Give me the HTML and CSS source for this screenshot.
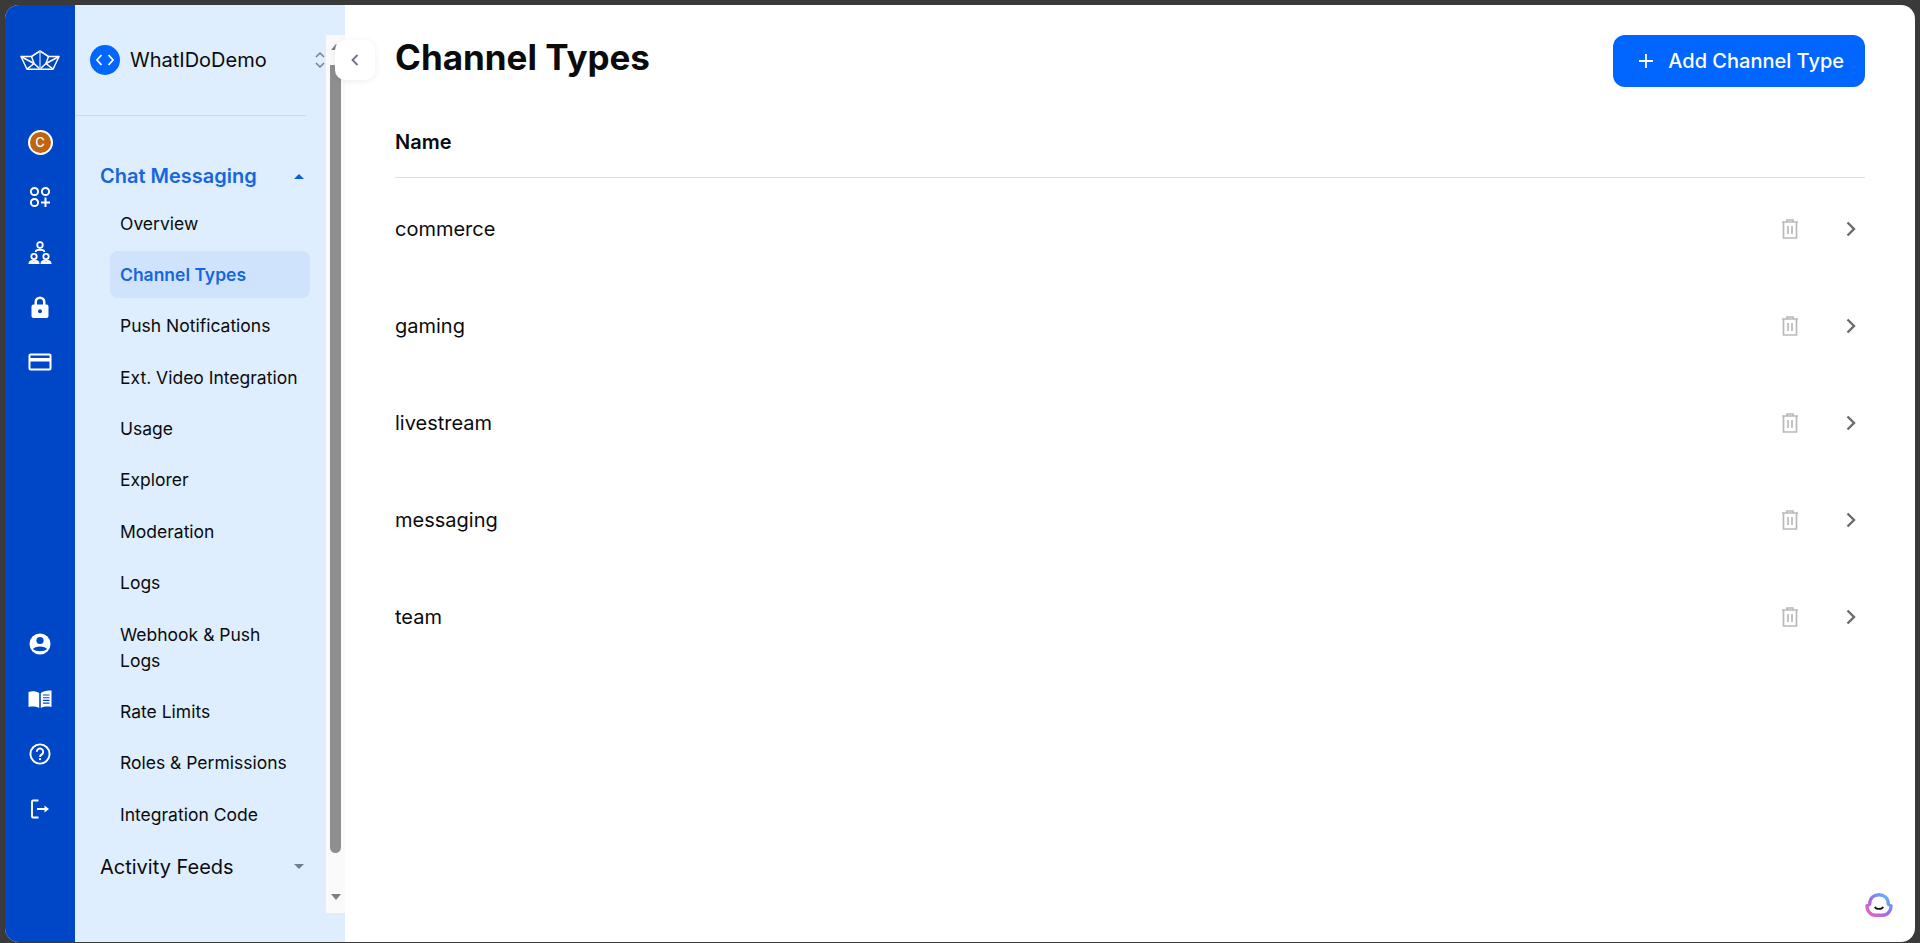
FILE: index.html
```html
<!DOCTYPE html>
<html lang="en">
<head>
    <meta charset="UTF-8">
    <meta name="viewport" content="width=device-width, initial-scale=1.0">
    <title>Channel Types</title>
    <link rel="stylesheet" href="styles.css">
</head>
<body>
    <div class="app">
        <!-- Icon rail -->
        <nav class="rail">
            <svg class="rail-logo" width="40" height="20" viewBox="0 0 40 20" fill="none" stroke="#fff" stroke-width="1.5" stroke-linejoin="round">
                <path d="M1 6.5 L11.5 6.5 L20 1 L28.5 6.5 L39 6.5 L33 19.2 H7 Z"/>
                <path d="M1 6.5 L14 13.5 L20 19 L26 13.5 L39 6.5"/>
                <path d="M11.5 6.5 L14 13.5 L7 19.2 M28.5 6.5 L26 13.5 L33 19.2"/>
                <path d="M20 1 V19" stroke="#9dc0f5" stroke-width="1.6"/>
            </svg>
            <div class="rail-avatar">C</div>
            <svg class="rail-icon" width="30" height="30" viewBox="0 0 30 30" fill="none" stroke="#fff" stroke-width="2">
                <circle cx="9.5" cy="9.5" r="3.6"/>
                <circle cx="20.5" cy="9.5" r="3.6"/>
                <circle cx="9.5" cy="20.5" r="3.6"/>
                <path d="M20.5 15.5 V25 M16 20.5 H25"/>
            </svg>
            <svg class="rail-icon" width="30" height="30" viewBox="0 0 30 30" fill="none" stroke="#fff" stroke-width="1.8">
                <circle cx="15" cy="8" r="2.8"/>
                <path d="M10.5 15 C11 12 19 12 19.5 15"/>
                <circle cx="9" cy="19.5" r="2.7"/>
                <path d="M4.5 26 C5 23 13 23 13.5 26 Z"/>
                <circle cx="21" cy="19.5" r="2.7"/>
                <path d="M16.5 26 C17 23 25 23 25.5 26 Z"/>
            </svg>
            <svg class="rail-icon" width="30" height="30" viewBox="0 0 30 30">
                <path fill="#fff" d="M9.5 12.5 V10 a5.5 5.5 0 0 1 11 0 V12.5 h1 a2 2 0 0 1 2 2 V24 a2 2 0 0 1-2 2 H8.5 a2 2 0 0 1-2-2 V14.5 a2 2 0 0 1 2-2 Z M12 12.5 h6 V10 a3 3 0 0 0-6 0 Z"/>
                <circle cx="15" cy="19.3" r="2" fill="#0047c7"/>
            </svg>
            <svg class="rail-icon" width="30" height="30" viewBox="0 0 30 30">
                <path fill="#fff" fill-rule="evenodd" d="M5.5 6.5 H24.5 a2 2 0 0 1 2 2 V21.5 a2 2 0 0 1-2 2 H5.5 a2 2 0 0 1-2-2 V8.5 a2 2 0 0 1 2-2 Z M5.5 8.5 V11 H24.5 V8.5 Z M5.5 14.5 V21.5 H24.5 V14.5 Z"/>
            </svg>
            <div class="rail-bottom">
                <svg class="rail-icon" width="30" height="30" viewBox="0 0 30 30">
                    <circle cx="15" cy="15" r="10.5" fill="#fff"/>
                    <circle cx="15" cy="11.5" r="3.6" fill="#0047c7"/>
                    <path fill="#0047c7" d="M8 20 C9.5 16.5 20.5 16.5 22 20 C19.5 23 10.5 23 8 20 Z"/>
                </svg>
                <svg class="rail-icon" width="30" height="30" viewBox="0 0 30 30">
                    <path fill="#fff" d="M3.5 8 C7 6.8 11 7 14.2 9 V24 C11 22.5 7 22.2 3.5 23 Z M15.8 9 C18.5 7 22.5 6.5 26.5 6.5 V23 C22.5 22.2 19 22.5 15.8 24 Z"/>
                    <path stroke="#0047c7" stroke-width="1.1" d="M18 11 H24.5 M18 13.7 H24.5 M18 16.4 H24.5 M18 19.1 H24.5"/>
                </svg>
                <svg class="rail-icon" width="30" height="30" viewBox="0 0 30 30" fill="none" stroke="#fff" stroke-width="1.9">
                    <circle cx="15" cy="15" r="9.6"/>
                    <path d="M11.8 12.8 a3.2 3.2 0 1 1 5 2.6 c-1.2 .8-1.8 1.3-1.8 2.6"/>
                    <circle cx="15" cy="20.2" r="1.1" fill="#fff" stroke="none"/>
                </svg>
                <svg class="rail-icon" width="30" height="30" viewBox="0 0 30 30" fill="none" stroke="#fff" stroke-width="1.9">
                    <path d="M13.5 6.5 H8 a1 1 0 0 0-1 1 V22.5 a1 1 0 0 0 1 1 H13.5"/>
                    <path d="M12 15 H20"/>
                    <path d="M19.5 11.5 L24 15 L19.5 18.5 Z" fill="#fff" stroke="none"/>
                </svg>
            </div>
        </nav>

        <!-- Sidebar -->
        <aside class="sidebar">
            <div class="sidebar-scroll">
                <div class="org">
                    <span class="org-badge">
                        <svg width="20" height="14" viewBox="0 0 20 14" fill="none" stroke="#fff" stroke-width="1.8">
                            <path d="M6.5 2 L2 7 L6.5 12 M13.5 2 L18 7 L13.5 12"/>
                        </svg>
                    </span>
                    <span class="org-name">WhatIDoDemo</span>
                    <svg class="org-switch" width="12" height="20" viewBox="0 0 12 20" fill="none" stroke="#6f7f90" stroke-width="1.5">
                        <path d="M2 7 L6 3 L10 7 M2 13 L6 17 L10 13"/>
                    </svg>
                </div>
                <div class="org-divider"></div>
                <div class="product product-active">
                    <span>Chat Messaging</span>
                    <span class="caret caret-up"></span>
                </div>
                <ul class="menu">
                    <li>Overview</li>
                    <li class="active">Channel Types</li>
                    <li>Push Notifications</li>
                    <li>Ext. Video Integration</li>
                    <li>Usage</li>
                    <li>Explorer</li>
                    <li>Moderation</li>
                    <li>Logs</li>
                    <li>Webhook &amp; Push Logs</li>
                    <li>Rate Limits</li>
                    <li>Roles &amp; Permissions</li>
                    <li>Integration Code</li>
                </ul>
                <div class="product">
                    <span>Activity Feeds</span>
                    <span class="caret caret-down"></span>
                </div>
            </div>
            <div class="scrollbar">
                <span class="scroll-arrow scroll-up"></span>
                <span class="scroll-thumb"></span>
                <span class="scroll-arrow scroll-down"></span>
            </div>
            <button class="collapse-btn">
                <svg width="12" height="14" viewBox="0 0 12 14" fill="none" stroke="#6b7280" stroke-width="1.8">
                    <path d="M8.5 2 L3.5 7 L8.5 12"/>
                </svg>
            </button>
        </aside>

        <!-- Main content -->
        <main class="content">
            <div class="page-head">
                <h1>Channel Types</h1>
                <button class="add-btn">
                    <svg width="16" height="16" viewBox="0 0 16 16" stroke="#fff" stroke-width="1.8">
                        <path d="M8 1 V15 M1 8 H15"/>
                    </svg>
                    Add Channel Type
                </button>
            </div>
            <div class="table-head">Name</div>
            <div class="row">
                <span class="row-name">commerce</span>
                <svg class="trash" width="18" height="20" viewBox="0 0 18 20" fill="none" stroke="#b9b9b9" stroke-width="1.7"><path d="M1 3 H17 M6 3 V1 H12 V3 M2.5 3 V19 H15.5 V3 M7 7 V15 M11 7 V15"/></svg>
                <svg class="chevron" width="12" height="16" viewBox="0 0 12 16" fill="none" stroke="#6b6b6b" stroke-width="2.4"><path d="M2.5 1.5 L9 8 L2.5 14.5"/></svg>
            </div>
            <div class="row">
                <span class="row-name">gaming</span>
                <svg class="trash" width="18" height="20" viewBox="0 0 18 20" fill="none" stroke="#b9b9b9" stroke-width="1.7"><path d="M1 3 H17 M6 3 V1 H12 V3 M2.5 3 V19 H15.5 V3 M7 7 V15 M11 7 V15"/></svg>
                <svg class="chevron" width="12" height="16" viewBox="0 0 12 16" fill="none" stroke="#6b6b6b" stroke-width="2.4"><path d="M2.5 1.5 L9 8 L2.5 14.5"/></svg>
            </div>
            <div class="row">
                <span class="row-name">livestream</span>
                <svg class="trash" width="18" height="20" viewBox="0 0 18 20" fill="none" stroke="#b9b9b9" stroke-width="1.7"><path d="M1 3 H17 M6 3 V1 H12 V3 M2.5 3 V19 H15.5 V3 M7 7 V15 M11 7 V15"/></svg>
                <svg class="chevron" width="12" height="16" viewBox="0 0 12 16" fill="none" stroke="#6b6b6b" stroke-width="2.4"><path d="M2.5 1.5 L9 8 L2.5 14.5"/></svg>
            </div>
            <div class="row">
                <span class="row-name">messaging</span>
                <svg class="trash" width="18" height="20" viewBox="0 0 18 20" fill="none" stroke="#b9b9b9" stroke-width="1.7"><path d="M1 3 H17 M6 3 V1 H12 V3 M2.5 3 V19 H15.5 V3 M7 7 V15 M11 7 V15"/></svg>
                <svg class="chevron" width="12" height="16" viewBox="0 0 12 16" fill="none" stroke="#6b6b6b" stroke-width="2.4"><path d="M2.5 1.5 L9 8 L2.5 14.5"/></svg>
            </div>
            <div class="row">
                <span class="row-name">team</span>
                <svg class="trash" width="18" height="20" viewBox="0 0 18 20" fill="none" stroke="#b9b9b9" stroke-width="1.7"><path d="M1 3 H17 M6 3 V1 H12 V3 M2.5 3 V19 H15.5 V3 M7 7 V15 M11 7 V15"/></svg>
                <svg class="chevron" width="12" height="16" viewBox="0 0 12 16" fill="none" stroke="#6b6b6b" stroke-width="2.4"><path d="M2.5 1.5 L9 8 L2.5 14.5"/></svg>
            </div>
        </main>

        <!-- Help bubble -->
        <svg class="help-bubble" width="30" height="26" viewBox="0 0 32 28" fill="none">
            <defs>
                <linearGradient id="bubble" x1="0" y1="1" x2="1" y2="0">
                    <stop offset="0" stop-color="#f45fc0"/>
                    <stop offset="0.5" stop-color="#9b6cf0"/>
                    <stop offset="1" stop-color="#4cc8f5"/>
                </linearGradient>
            </defs>
            <path d="M6 13 C6 6 11 3 16 3 C21 3 26 6 26 13 L29 15 C29 19 26 25 20 25 H12 C6 25 3 19 3 15 Z" stroke="url(#bubble)" stroke-width="3.6" stroke-linejoin="round"/>
            <path d="M11.5 16 C13 19 19 19 20.5 16" stroke="#111" stroke-width="1.9"/>
        </svg>
    </div>
</body>
</html>
```

FILE: styles.css
```css
* {
    box-sizing: border-box;
}

html, body {
    height: 100%;
}

body {
    margin: 0;
    padding: 5px 5px 1px;
    background: #3a3a3a;
    font-family: "Inter", "Liberation Sans", sans-serif;
    color: #0b0b0b;
    overflow: hidden;
}

.app {
    position: relative;
    display: flex;
    height: 100%;
    border-radius: 14px;
    overflow: hidden;
    background: #fff;
}

/* icon rail */
.rail {
    flex: 0 0 70px;
    display: flex;
    flex-direction: column;
    align-items: center;
    padding-top: 45px;
    background: #0047c7;
}

.rail-logo {
    flex: none;
}

.rail-avatar {
    flex: none;
    width: 25px;
    height: 25px;
    margin: 59.5px 0 27.5px;
    border: 2px solid #fff;
    border-radius: 50%;
    background: #bf6410;
    color: #fff;
    font-size: 13px;
    font-weight: 500;
    line-height: 21px;
    text-align: center;
}

.rail-icon {
    flex: none;
    display: block;
    margin-bottom: 25px;
}

.rail-bottom {
    display: flex;
    flex-direction: column;
    margin-top: 227px;
}

/* sidebar */
.sidebar {
    position: relative;
    flex: 0 0 270px;
    display: flex;
    padding: 30px 0 29px;
    background: #deeeff;
}

.sidebar-scroll {
    flex: 1;
    min-width: 0;
}

.org {
    display: flex;
    align-items: center;
    height: 50px;
    padding-left: 15px;
}

.org-divider {
    height: 1px;
    margin: 30px 20px 40px 0;
    background: #ccd9e7;
}

.org-badge {
    display: flex;
    align-items: center;
    justify-content: center;
    flex: none;
    width: 30px;
    height: 30px;
    border-radius: 50%;
    background: #0066ff;
}

.org-name {
    margin-left: 10px;
    font-size: 20px;
    font-weight: 400;
    white-space: nowrap;
}

.org-switch {
    margin-left: auto;
    flex: none;
}

.product {
    display: flex;
    align-items: center;
    justify-content: space-between;
    height: 40px;
    margin-right: 16px;
    padding: 0 6px 0 25px;
    font-size: 20px;
    line-height: 40px;
}

.product-active {
    color: #1766dd;
    font-weight: 600;
}

.caret {
    width: 0;
    height: 0;
    border-left: 5px solid transparent;
    border-right: 5px solid transparent;
}

.caret-up {
    border-bottom: 5px solid #0b5fdb;
}

.caret-down {
    border-top: 5px solid #6f7f90;
}

.menu {
    list-style: none;
    margin: 4px 16px 8.5px 35px;
    padding: 0;
}

.menu li {
    margin-bottom: 4.4px;
    padding: 10.5px 10px;
    border-radius: 8px;
    font-size: 17.5px;
    line-height: 26px;
}

.menu li.active {
    background: #cfe3fc;
    color: #1766dd;
    font-weight: 600;
}

.scrollbar {
    flex: 0 0 19px;
    display: flex;
    flex-direction: column;
    align-items: center;
    background: #fafafa;
}

.scroll-arrow {
    width: 0;
    height: 0;
    border-left: 5px solid transparent;
    border-right: 5px solid transparent;
}

.scroll-up {
    margin-top: 9px;
    border-bottom: 6px solid #7f7f7f;
}

.scroll-down {
    margin-top: 41px;
    border-top: 6px solid #7f7f7f;
}

.scroll-thumb {
    width: 11px;
    height: 788px;
    margin-top: 15px;
    border-radius: 0 0 6px 6px;
    background: #8e8e8e;
}

.collapse-btn {
    position: absolute;
    top: 35px;
    left: 260px;
    display: flex;
    align-items: center;
    justify-content: center;
    width: 40px;
    height: 40px;
    padding: 0;
    border: none;
    border-radius: 10px;
    background: #fff;
    box-shadow: 0 1px 6px rgba(0, 0, 0, 0.08);
}

/* main */
.content {
    flex: 1;
    min-width: 0;
    padding: 30px 50px 0 50px;
}

.page-head {
    display: flex;
    align-items: flex-start;
    justify-content: space-between;
    height: 84px;
}

h1 {
    margin: -1px 0 0;
    font-size: 35px;
    font-weight: 700;
    line-height: 46px;
}

.add-btn {
    display: flex;
    align-items: center;
    gap: 14px;
    height: 52px;
    padding: 0 21px 0 25px;
    border: none;
    border-radius: 12px;
    background: #0066ff;
    color: #fff;
    font-family: inherit;
    font-size: 20px;
    font-weight: 500;
}

.table-head {
    height: 59px;
    margin-bottom: 2.5px;
    border-bottom: 1px solid #dedede;
    font-size: 20px;
    font-weight: 600;
    line-height: 47px;
}

.row {
    display: flex;
    align-items: center;
    height: 97px;
}

.row-name {
    flex: 1;
    font-size: 20px;
}

.trash {
    flex: none;
    margin-right: 46.5px;
}

.chevron {
    flex: none;
    margin-right: 8px;
}

.help-bubble {
    position: absolute;
    right: 21px;
    bottom: 24px;
}
```
